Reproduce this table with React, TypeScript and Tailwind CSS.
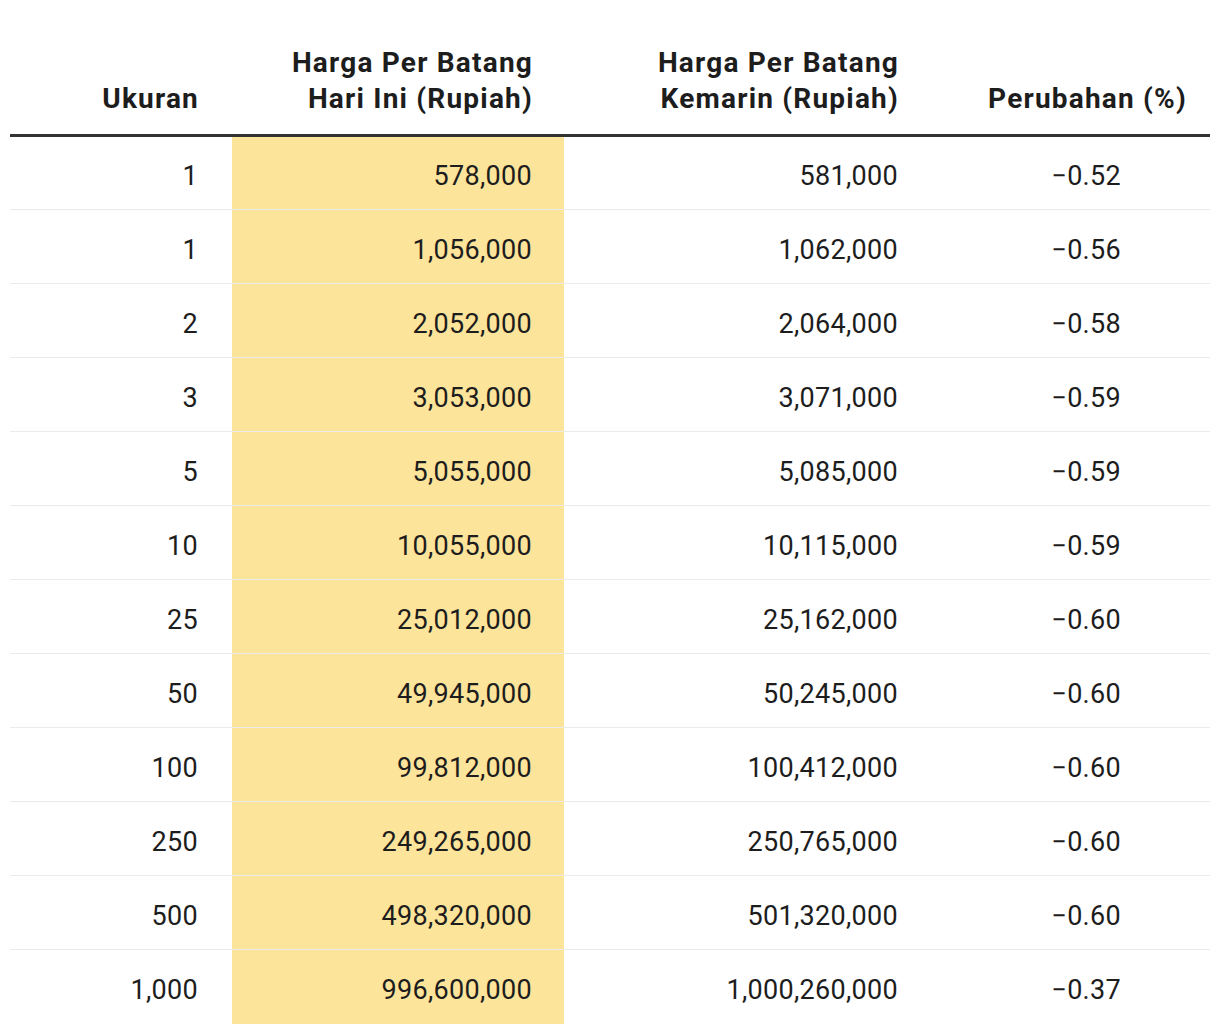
const rows = [
  ["1", "578,000", "581,000", "−0.52"],
  ["1", "1,056,000", "1,062,000", "−0.56"],
  ["2", "2,052,000", "2,064,000", "−0.58"],
  ["3", "3,053,000", "3,071,000", "−0.59"],
  ["5", "5,055,000", "5,085,000", "−0.59"],
  ["10", "10,055,000", "10,115,000", "−0.59"],
  ["25", "25,012,000", "25,162,000", "−0.60"],
  ["50", "49,945,000", "50,245,000", "−0.60"],
  ["100", "99,812,000", "100,412,000", "−0.60"],
  ["250", "249,265,000", "250,765,000", "−0.60"],
  ["500", "498,320,000", "501,320,000", "−0.60"],
  ["1,000", "996,600,000", "1,000,260,000", "−0.37"],
];

export default function App() {
  return (
    <div className="bg-white min-h-[1034px] px-[10px] pt-[45px] font-['Roboto',sans-serif] text-[#1d1d1d]">
      <table className="w-[1200px] border-collapse">
        <thead>
          <tr className="border-b-[3px] border-[#333333] text-[28px] font-bold leading-[36px] tracking-[1.2px] align-bottom">
            <th className="w-[222px] text-right pr-[33px] pb-[17px]">Ukuran</th>
            <th className="w-[332px] text-right pr-[31px] pb-[17px]">
              Harga Per Batang
              <br />
              Hari Ini (Rupiah)
            </th>
            <th className="w-[366px] text-right pr-[31px] pb-[17px]">
              Harga Per Batang
              <br />
              Kemarin (Rupiah)
            </th>
            <th className="w-[280px] text-right pr-[23px] pb-[17px]">Perubahan (%)</th>
          </tr>
        </thead>
        <tbody className="text-[27px] leading-[36px] tracking-[0.3px]">
          {rows.map((r, i) => (
            <tr
              key={i}
              className={
                i < rows.length - 1
                  ? "h-[74px] border-b border-[#ebebeb]"
                  : "h-[74px]"
              }
            >
              <td className="text-right pr-[34px] pt-[6px]">{r[0]}</td>
              <td className="text-right pr-[32px] pt-[6px] bg-[#fde49b]">{r[1]}</td>
              <td className="text-right pr-[32px] pt-[6px]">{r[2]}</td>
              <td className="text-right pr-[89px] pt-[6px]">{r[3]}</td>
            </tr>
          ))}
        </tbody>
      </table>
    </div>
  );
}
